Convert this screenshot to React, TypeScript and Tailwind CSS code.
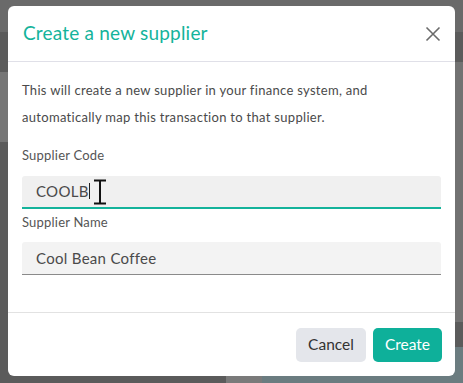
import React from "react";

const App: React.FC = () => {
  return (
    <div className="relative w-[463px] h-[383px] overflow-hidden bg-[#5b5b5b] font-['Lato',sans-serif]">
      {/* page behind the overlay */}
      <div className="absolute inset-x-0 top-0 h-[32px] bg-[#6a6a6a]" />
      <div className="absolute left-0 top-[72px] w-[8px] h-[70px] bg-[#767676]" />
      <div className="absolute right-0 top-[62px] w-[8px] h-[260px] bg-[#727272]" />
      <div className="absolute left-[226px] bottom-0 w-[36px] h-[8px] bg-[#7a7a7a]" />
      <div className="absolute left-[262px] bottom-0 w-[201px] h-[36px] bg-[#6b7c80]" />

      <div className="absolute left-[8px] top-[6px] w-[447px] h-[370px] bg-white rounded-[6px] flex flex-col">
        <div className="flex items-center justify-between h-[56px] px-[15px] border-b border-[#e0e0e8]">
          <h2 className="text-[19px] text-[#14b39b] tracking-[0.2px]">Create a new supplier</h2>
          <svg width="16" height="16" viewBox="0 0 16 16" className="mr-[-1px]">
            <path d="M1.5 1.5 L14.5 14.5 M14.5 1.5 L1.5 14.5" stroke="#6b6b6b" strokeWidth="1.6" />
          </svg>
        </div>

        <div className="flex-1 px-[14px] pt-[15px]">
          <p className="text-[13px] leading-[27px] tracking-[0.3px] text-[#4a4a4a]">
            This will create a new supplier in your finance system, and
            <br />
            automatically map this transaction to that supplier.
          </p>

          <label className="block mt-[15px] text-[13px] tracking-[0.2px] text-[#555]">Supplier Code</label>
          <div className="relative mt-[10px] h-[33px] bg-[#f0f0f0] rounded-t-[3px] border-b-2 border-[#14b39b] flex items-center pl-[14px] text-[15px] tracking-[0.3px] text-[#4a4a4a]">
            COOLB<span className="inline-block w-px h-[16px] bg-[#222]" />
            <svg width="14" height="26" viewBox="0 0 14 26" className="absolute left-[71px] top-[3px]">
              <path d="M1 1.5 H13 M1 24.5 H13 M7 1.5 V24.5" stroke="#111" strokeWidth="2" fill="none" />
            </svg>
          </div>

          <label className="block mt-[4px] text-[13px] tracking-[0.2px] text-[#555]">Supplier Name</label>
          <div className="mt-[10px] h-[33px] bg-[#f3f3f3] rounded-t-[3px] border-b border-[#8a8a8a] flex items-center pl-[14px] text-[15px] tracking-[0.3px] text-[#4a4a4a]">
            Cool Bean Coffee
          </div>
        </div>

        <div className="h-[64px] border-t border-[#e2e2e2] flex items-center justify-end gap-[7px] px-[13px]">
          <button className="h-[34px] w-[70px] rounded-[5px] bg-[#e4e6eb] text-[15.5px] text-[#333]">Cancel</button>
          <button className="h-[34px] w-[69px] rounded-[5px] bg-[#0eb09a] text-[15.5px] text-white">Create</button>
        </div>
      </div>
    </div>
  );
};

export default App;
